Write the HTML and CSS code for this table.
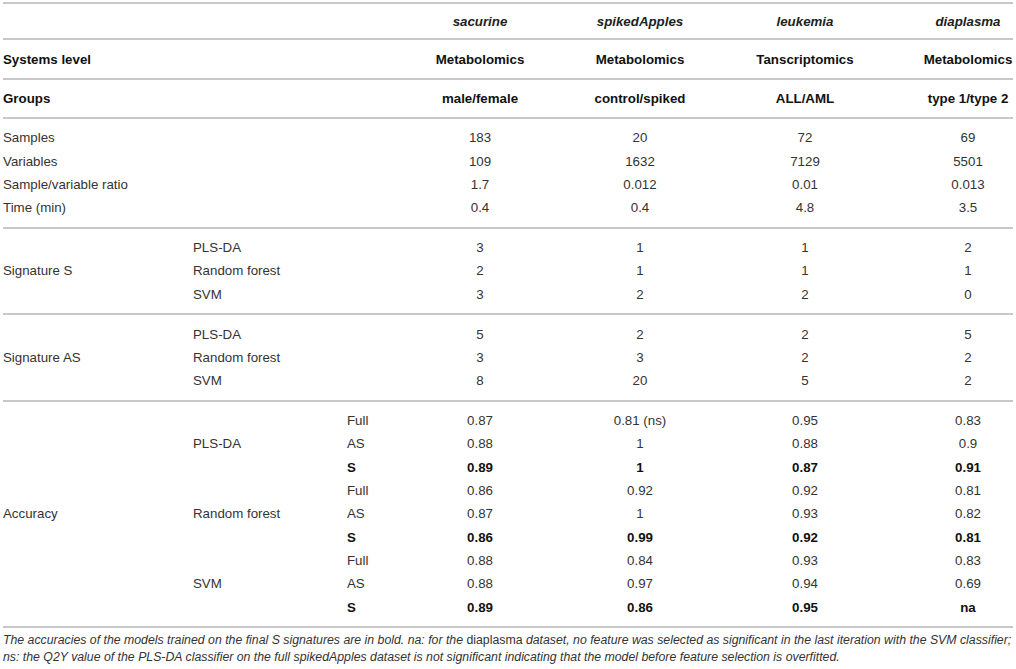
FILE: index.html
```html
<!DOCTYPE html>
<html lang="en">

<head>
    <meta charset="UTF-8">
    <title>Table - feature selection results</title>
    <link rel="stylesheet" href="styles.css">
</head>

<body>
    <div class="tbl">
        <!-- dataset names -->
        <div class="sect head h1">
            <div class="lab"></div>
            <div class="val name">sacurine</div>
            <div class="val name">spikedApples</div>
            <div class="val name">leukemia</div>
            <div class="val last name">diaplasma</div>
        </div>
        <div class="sect head h2">
            <div class="lab b">Systems level</div>
            <div class="val b">Metabolomics</div>
            <div class="val b">Metabolomics</div>
            <div class="val b">Tanscriptomics</div>
            <div class="val last b">Metabolomics</div>
        </div>
        <div class="sect head h3">
            <div class="lab b">Groups</div>
            <div class="val b">male/female</div>
            <div class="val b">control/spiked</div>
            <div class="val b">ALL/AML</div>
            <div class="val last b">type 1/type 2</div>
        </div>

        <!-- dataset sizes -->
        <div class="sect rows s1">
            <div class="lab">Samples</div>
            <div class="val">183</div><div class="val">20</div><div class="val">72</div><div class="val last">69</div>
            <div class="lab">Variables</div>
            <div class="val">109</div><div class="val">1632</div><div class="val">7129</div><div class="val last">5501</div>
            <div class="lab">Sample/variable ratio</div>
            <div class="val">1.7</div><div class="val">0.012</div><div class="val">0.01</div><div class="val last">0.013</div>
            <div class="lab">Time (min)</div>
            <div class="val">0.4</div><div class="val">0.4</div><div class="val">4.8</div><div class="val last">3.5</div>
        </div>

        <!-- signature S -->
        <div class="sect rows">
            <div class="group g3">Signature S</div>
            <div>PLS-DA</div><div></div>
            <div class="val">3</div><div class="val">1</div><div class="val">1</div><div class="val last">2</div>
            <div>Random forest</div><div></div>
            <div class="val">2</div><div class="val">1</div><div class="val">1</div><div class="val last">1</div>
            <div>SVM</div><div></div>
            <div class="val">3</div><div class="val">2</div><div class="val">2</div><div class="val last">0</div>
        </div>

        <!-- signature AS -->
        <div class="sect rows s3">
            <div class="group g3">Signature AS</div>
            <div>PLS-DA</div><div></div>
            <div class="val">5</div><div class="val">2</div><div class="val">2</div><div class="val last">5</div>
            <div>Random forest</div><div></div>
            <div class="val">3</div><div class="val">3</div><div class="val">2</div><div class="val last">2</div>
            <div>SVM</div><div></div>
            <div class="val">8</div><div class="val">20</div><div class="val">5</div><div class="val last">2</div>
        </div>

        <!-- accuracy -->
        <div class="sect rows">
            <div class="group g9">Accuracy</div>

            <div class="group g3">PLS-DA</div>
            <div>Full</div>
            <div class="val">0.87</div><div class="val">0.81 (ns)</div><div class="val">0.95</div><div class="val last">0.83</div>
            <div>AS</div>
            <div class="val">0.88</div><div class="val">1</div><div class="val">0.88</div><div class="val last">0.9</div>
            <div class="b">S</div>
            <div class="val b">0.89</div><div class="val b">1</div><div class="val b">0.87</div><div class="val last b">0.91</div>

            <div class="group g3">Random forest</div>
            <div>Full</div>
            <div class="val">0.86</div><div class="val">0.92</div><div class="val">0.92</div><div class="val last">0.81</div>
            <div>AS</div>
            <div class="val">0.87</div><div class="val">1</div><div class="val">0.93</div><div class="val last">0.82</div>
            <div class="b">S</div>
            <div class="val b">0.86</div><div class="val b">0.99</div><div class="val b">0.92</div><div class="val last b">0.81</div>

            <div class="group g3">SVM</div>
            <div>Full</div>
            <div class="val">0.88</div><div class="val">0.84</div><div class="val">0.93</div><div class="val last">0.83</div>
            <div>AS</div>
            <div class="val">0.88</div><div class="val">0.97</div><div class="val">0.94</div><div class="val last">0.69</div>
            <div class="b">S</div>
            <div class="val b">0.89</div><div class="val b">0.86</div><div class="val b">0.95</div><div class="val last b">na</div>
        </div>
    </div>

    <p class="note">
        The accuracies of the models trained on the final S signatures are in bold. na: for the <span class="up">diaplasma</span> dataset, no feature was selected as significant in the last iteration with the SVM classifier;<br>
        ns: the Q2Y value of the PLS-DA classifier on the full spikedApples dataset is not significant indicating that the model before feature selection is overfitted.
    </p>
</body>

</html>
```

FILE: styles.css
```css
body {
    margin: 0;
    padding: 0;
    font-family: "Liberation Sans", Arial, sans-serif;
    font-size: 13.3px;
    color: #333;
    background: #fff;
}

.tbl {
    width: 1010px;
    margin: 2px 0 0 3px;
    border-top: 2px solid #c8c8c8;
}

/* every block of rows is one grid, closed by a grey rule */
.sect {
    display: grid;
    grid-template-columns: 190px 154px 55px 156px 164px 166px 1fr;
    align-items: center;
    border-bottom: 2px solid #c8c8c8;
}

.head .lab {
    grid-column: span 3;
}

.h1 {
    height: 34px;
}

.h2 {
    height: 38px;
}

.h3 {
    height: 37px;
}

.rows {
    grid-auto-rows: 23.33px;
    padding: 7px 0;
}

.rows .lab {
    grid-column: span 3;
}

.s1 {
    padding: 7.3px 0 7.4px;
}

.s3 {
    padding: 7.5px 0;
}

.group {
    align-self: center;
}

.g3 {
    grid-row: span 3;
}

.g9 {
    grid-row: span 9;
}

.val {
    text-align: center;
}

/* last column sits a bit right of its cell */
.val.last {
    padding-left: 35px;
}

.b {
    font-weight: bold;
    color: #111;
}

.name {
    font-weight: bold;
    font-style: italic;
    color: #222;
}

.note {
    margin: 4px 0 0 3px;
    font-size: 12.3px;
    line-height: 17px;
    font-style: italic;
    color: #333;
    white-space: nowrap;
}

.note .up {
    font-style: normal;
}
```
